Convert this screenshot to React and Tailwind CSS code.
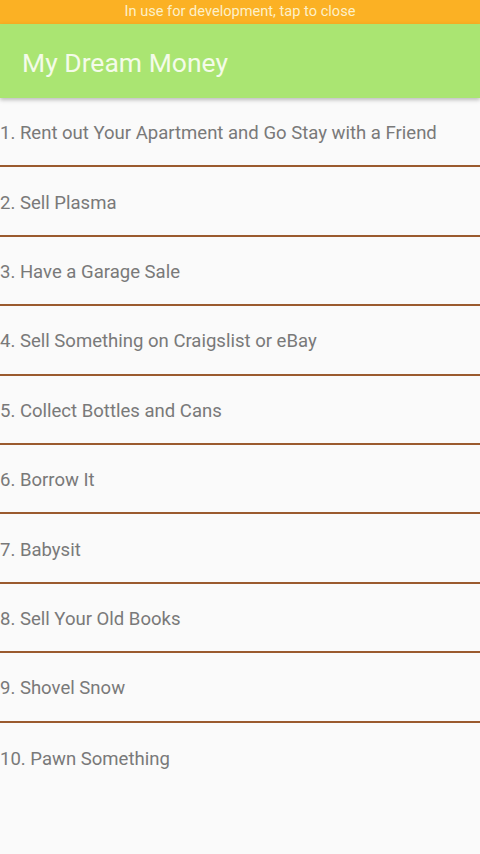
import React from "react";

const items = [
  "1. Rent out Your Apartment and Go Stay with a Friend",
  "2. Sell Plasma",
  "3. Have a Garage Sale",
  "4. Sell Something on Craigslist or eBay",
  "5. Collect Bottles and Cans",
  "6. Borrow It",
  "7. Babysit",
  "8. Sell Your Old Books",
  "9. Shovel Snow",
  "10. Pawn Something",
];

export default function App() {
  return (
    <div className="w-[480px] h-[854px] bg-[#fafafa] overflow-hidden flex flex-col" style={{ fontFamily: "Roboto, 'Noto Sans', sans-serif" }}>
      <div className="h-[24px] bg-[#fbb124] flex items-center justify-center text-[14.6px] text-[#fdf0c8] shrink-0">
        In use for development, tap to close
      </div>
      <div className="relative z-10 h-[74px] bg-[#aae572] flex items-center pl-[22px] text-[26.5px] text-[#f4fbe9] shadow-[0_2px_4px_rgba(0,0,0,0.25)] shrink-0">
        <span className="mt-[3px]">My Dream Money</span>
      </div>
      <div className="flex flex-col">
        {items.map((t, i) => (
          <div
            key={i}
            className={`h-[69.4px] flex items-center text-[18.55px] text-[#797979] shrink-0 ${i < items.length - 1 ? "border-b-[2.5px] border-[#9a5a2e]" : ""}`}
          >
            <span className="mt-[5px]">{t}</span>
          </div>
        ))}
      </div>
    </div>
  );
}
